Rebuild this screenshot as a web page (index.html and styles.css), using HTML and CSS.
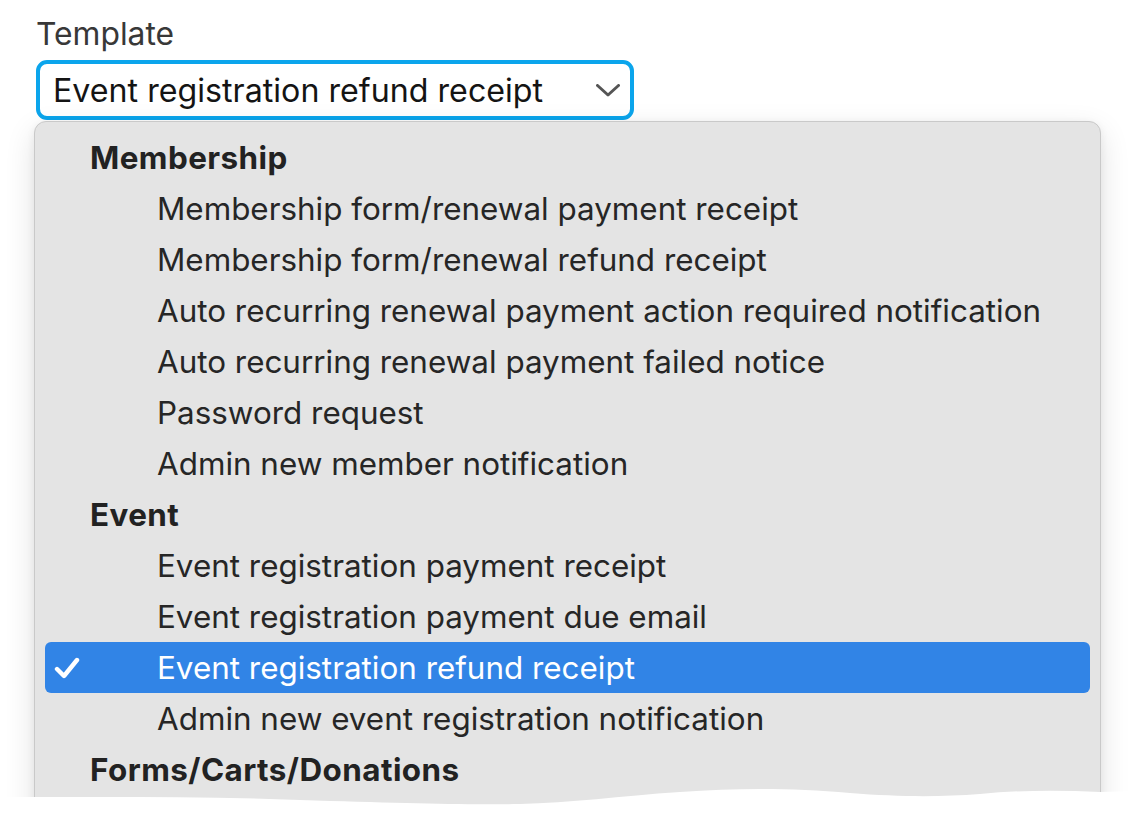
FILE: index.html
```html
<!DOCTYPE html>
<html lang="en">
<head>
<meta charset="utf-8">
<title>Template select</title>
<link rel="stylesheet" href="styles.css">
</head>
<body>
<div class="page">
  <div class="label">Template</div>
  <div class="select">
    <span class="select-value">Event registration refund receipt</span>
    <svg class="chevron" width="24" height="13" viewBox="0 0 24 13" aria-hidden="true">
      <path d="M1.5 1.5 L12 11 L22.5 1.5" fill="none" stroke="#555" stroke-width="3" stroke-linecap="round" stroke-linejoin="round"/>
    </svg>
  </div>
  <div class="menu">
    <div class="group">Membership</div>
    <div class="option">Membership form/renewal payment receipt</div>
    <div class="option">Membership form/renewal refund receipt</div>
    <div class="option">Auto recurring renewal payment action required notification</div>
    <div class="option">Auto recurring renewal payment failed notice</div>
    <div class="option">Password request</div>
    <div class="option">Admin new member notification</div>
    <div class="group">Event</div>
    <div class="option">Event registration payment receipt</div>
    <div class="option">Event registration payment due email</div>
    <div class="option selected">
      <svg class="check" width="26" height="22" viewBox="0 0 26 22" aria-hidden="true">
        <path d="M3 12 L10 19 L23 3" fill="none" stroke="#fff" stroke-width="4.4" stroke-linecap="round" stroke-linejoin="round"/>
      </svg>
      Event registration refund receipt
    </div>
    <div class="option">Admin new event registration notification</div>
    <div class="group">Forms/Carts/Donations</div>
  </div>
  <svg class="tear" width="1135" height="40" viewBox="0 777 1135 40" preserveAspectRatio="none" aria-hidden="true">
    <path d="M0 797 C100 797 200 796 300 800 C400 803 460 805 520 804 C570 803 620 796 680 792 C740 788 790 788 850 793 C900 797 940 797 980 794 C1020 790 1060 790 1100 792 L1135 791 L1135 817 L0 817 Z" fill="#ffffff"/>
  </svg>
</div>
</body>
</html>
```

FILE: styles.css
```css
* { box-sizing: border-box; }

html, body {
  margin: 0;
  padding: 0;
  background: #ffffff;
}

body {
  font-family: Inter, "Noto Sans", "Liberation Sans", sans-serif;
  color: #222;
}

.page {
  position: relative;
  width: 1135px;
  height: 817px;
  overflow: hidden;
  padding-left: 34px;
}

.label {
  margin-left: 2px;
  padding-top: 7px;
  height: 60px;
  line-height: 53px;
  font-size: 31.8px;
  color: #383838;
}

.select {
  margin-left: 2px;
  width: 598px;
  height: 60px;
  border: 4px solid #0ba5ec;
  border-radius: 11px;
  background: #fff;
  display: flex;
  align-items: center;
  padding: 0 10px 0 13px;
  justify-content: space-between;
}

.select-value {
  font-size: 32.2px;
  color: #141414;
}

.chevron {
  display: block;
}

.menu {
  margin-top: 1px;
  width: 1067px;
  background: #e4e4e4;
  border: 1px solid #c9c9c9;
  border-radius: 12px;
  padding: 10px 10px 30px;
  box-shadow: 0 10px 30px rgba(0, 0, 0, 0.12), 0 2px 8px rgba(0, 0, 0, 0.06);
}

.group,
.option {
  height: 51px;
  display: flex;
  align-items: center;
  font-size: 31.4px;
  white-space: nowrap;
}

.group {
  padding-left: 45px;
  font-weight: 700;
  letter-spacing: 0.45px;
  color: #222;
}

.option {
  padding-left: 112px;
  color: #262626;
  position: relative;
}

.option.selected {
  background: #3184e6;
  color: #ffffff;
  border-radius: 6px;
}

.check {
  position: absolute;
  left: 9px;
  top: 15px;
}

.tear {
  position: absolute;
  left: 0;
  bottom: 0;
  display: block;
}
```
